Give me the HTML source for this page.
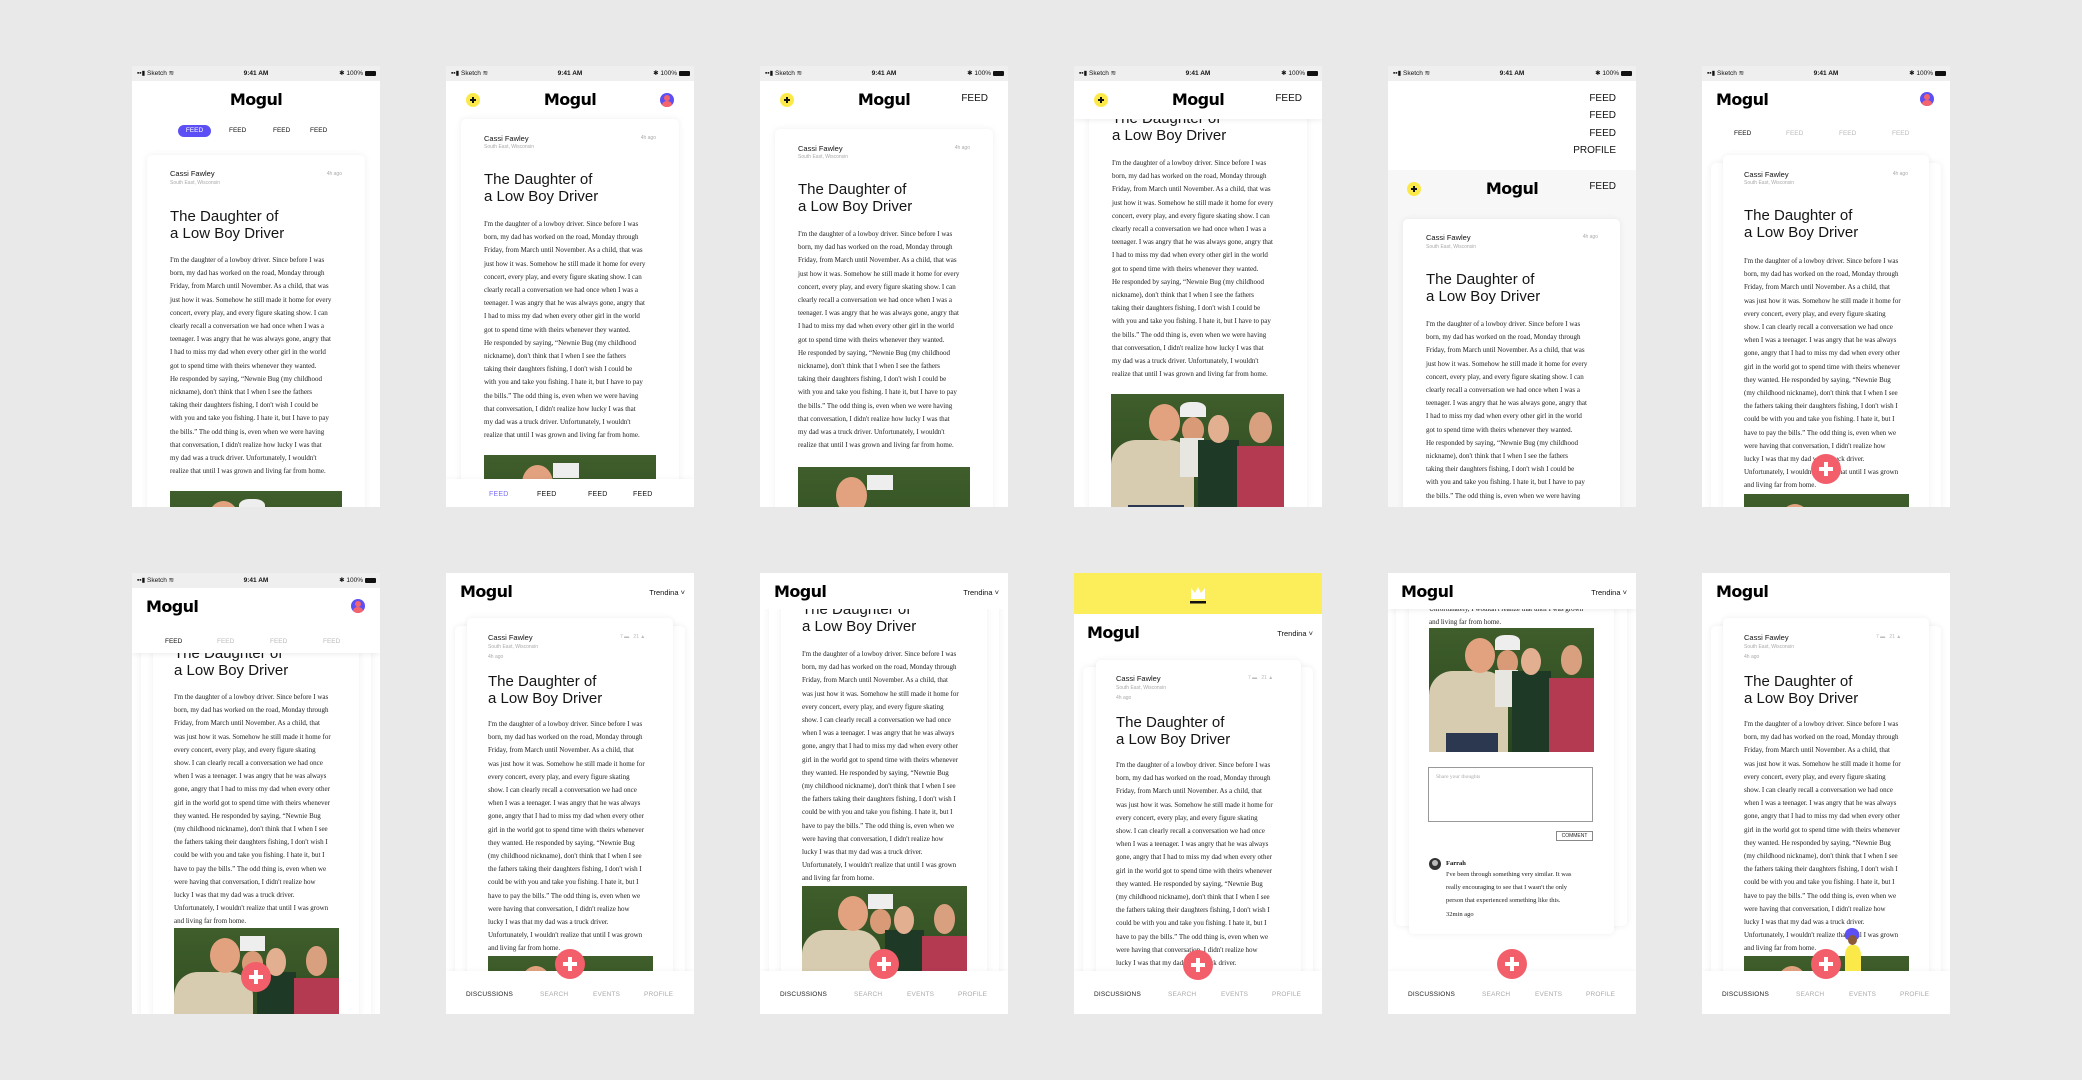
<!DOCTYPE html>
<html><head><meta charset="utf-8"><style>
*{margin:0;padding:0;box-sizing:border-box}
body{width:2082px;height:1080px;background:#e9e9e9;position:relative;overflow:hidden;font-family:"Liberation Sans",sans-serif}
.ph{position:absolute;width:248px;height:441px;background:#fff;overflow:hidden}
.a{position:absolute}
.sb{position:absolute;left:0;top:0;width:248px;height:15px;background:#efefef;font:bold 6.5px/15px "Liberation Sans",sans-serif;color:#111}
.sb .l{position:absolute;left:5px;font-weight:normal}
.sb .c{position:absolute;left:0;width:248px;text-align:center}
.sb .r{position:absolute;right:4px;font-weight:normal}
.bat{display:inline-block;width:11px;height:5px;background:#111;border-radius:1px;vertical-align:-0.5px;margin-left:2px}
.logo{position:absolute;font:bold 16px/20px "DejaVu Sans",sans-serif;letter-spacing:-0.6px;color:#000}
.card{position:absolute;background:#fff;border-radius:5px;box-shadow:0 0 7px rgba(0,0,0,.07)}
.name{position:absolute;font:7.5px/10px "Liberation Sans",sans-serif;color:#111}
.loc{position:absolute;font:5px/7px "Liberation Sans",sans-serif;color:#aaa}
.ago{position:absolute;font:5px/7px "Liberation Sans",sans-serif;color:#aaa}
.title{position:absolute;font:15px/17.4px "Liberation Sans",sans-serif;color:#151515;white-space:nowrap}
.body{position:absolute;font:7px/13.2px "Liberation Serif",serif;color:#222;white-space:nowrap}
.fab{position:absolute;width:30px;height:30px;margin:-15px 0 0 -15px;border-radius:50%;background:#f25f6a;z-index:5}
.fab:before{content:"";position:absolute;left:8px;top:13px;width:14px;height:4px;background:#fff}
.fab:after{content:"";position:absolute;left:13px;top:8px;width:4px;height:14px;background:#fff}
.nav{position:absolute;left:0;top:398px;width:248px;height:44px;background:#fff;z-index:4;box-shadow:0 -1px 4px rgba(0,0,0,.04);font:6.5px/8px "Liberation Sans",sans-serif;color:#aaa;letter-spacing:.2px}
.nav span{position:absolute;top:20px}
.plus{position:absolute;width:14px;height:14px;margin:-7px 0 0 -7px;border-radius:50%;background:#fbe94a}
.plus:before{content:"";position:absolute;left:4px;top:6px;width:6px;height:2px;background:#111}
.plus:after{content:"";position:absolute;left:6px;top:4px;width:2px;height:6px;background:#111}
.av{position:absolute;width:14px;height:14px;margin:-7px 0 0 -7px;border-radius:50%;background:#5b4ff5;overflow:hidden}
.av:before{content:"";position:absolute;left:4px;top:2px;width:6px;height:6px;border-radius:50%;background:#f4646c}
.av:after{content:"";position:absolute;left:2px;top:8px;width:10px;height:8px;border-radius:50%;background:#f4646c}
.hdr{position:absolute;left:0;top:0;width:248px;background:#fff;z-index:3;box-shadow:0 2px 5px rgba(0,0,0,.06)}
.tab{position:absolute;font:6.5px/10px "Liberation Sans",sans-serif;color:#111}
.trend{position:absolute;font:7.5px/10px "Liberation Sans",sans-serif;color:#111}
.cnt{position:absolute;font:5px/7px "Liberation Sans",sans-serif;color:#bbb}
.feedr{position:absolute;font:10px/12px "Liberation Sans",sans-serif;color:#111}
.photo{position:absolute;overflow:hidden;background:linear-gradient(#3f5e2b,#29451d)}
.photo i{position:absolute;display:block}
</style></head><body>

<!-- ROW 1 -->
<!-- P1 -->
<div class="ph" style="left:132px;top:66px">
 <div class="sb"><span class="l">▪▪▮ Sketch ≋</span><span class="c">9:41 AM</span><span class="r">✱ 100%<span class="bat"></span></span></div>
 <div class="logo" style="left:0;width:248px;text-align:center;top:24px">Mogul</div>
 <div class="a" style="left:46px;top:59px;width:33px;height:12px;border-radius:6px;background:#5b4ff5"></div>
 <div class="tab" style="left:46px;width:33px;text-align:center;top:60px;color:#fff">FEED</div>
 <div class="tab" style="left:97px;top:60px">FEED</div>
 <div class="tab" style="left:141px;top:60px">FEED</div>
 <div class="tab" style="left:178px;top:60px">FEED</div>
 <div class="card" style="left:15px;top:89px;width:218px;height:400px"></div>
 <div class="name" style="left:38px;top:103px">Cassi Fawley</div>
 <div class="loc" style="left:38px;top:114px">South East, Wisconsin</div>
 <div class="ago" style="left:190px;width:20px;text-align:right;top:105px">4h ago</div>
 <div class="title" style="left:38px;top:142px">The Daughter of<br>a Low Boy Driver</div>
 <div class="body" style="left:38px;top:188px">I'm the daughter of a lowboy driver. Since before I was<br>born, my dad has worked on the road, Monday through<br>Friday, from March until November. As a child, that was<br>just how it was. Somehow he still made it home for every<br>concert, every play, and every figure skating show. I can<br>clearly recall a conversation we had once when I was a<br>teenager. I was angry that he was always gone, angry that<br>I had to miss my dad when every other girl in the world<br>got to spend time with theirs whenever they wanted.<br>He responded by saying, “Newnie Bug (my childhood<br>nickname), don't think that I when I see the fathers<br>taking their daughters fishing, I don't wish I could be<br>with you and take you fishing. I hate it, but I have to pay<br>the bills.” The odd thing is, even when we were having<br>that conversation, I didn't realize how lucky I was that<br>my dad was a truck driver. Unfortunately, I wouldn't<br>realize that until I was grown and living far from home.</div>
 <div class="photo" style="left:38px;top:425px;width:172px;height:130px"><i style="left:0;top:35%;width:48%;height:65%;background:#d8ccb0;border-radius:30% 30% 0 0"></i><i style="left:22%;top:8%;width:18%;height:28%;background:#e2a27f;border-radius:50%"></i><i style="left:40%;top:6%;width:15%;height:12%;background:#eee;border-radius:40% 40% 0 0"></i><i style="left:41%;top:18%;width:13%;height:20%;background:#d99a78;border-radius:50%"></i><i style="left:50%;top:35%;width:24%;height:65%;background:#1e3a26"></i><i style="left:56%;top:16%;width:12%;height:22%;background:#e2b090;border-radius:50%"></i><i style="left:73%;top:40%;width:27%;height:60%;background:#b43a52"></i><i style="left:80%;top:14%;width:13%;height:24%;background:#d9a080;border-radius:50%"></i></div>
</div>

<!-- P2 -->
<div class="ph" style="left:446px;top:66px">
 <div class="sb"><span class="l">▪▪▮ Sketch ≋</span><span class="c">9:41 AM</span><span class="r">✱ 100%<span class="bat"></span></span></div>
 <div class="plus" style="left:27px;top:34px"></div>
 <div class="logo" style="left:0;width:248px;text-align:center;top:24px">Mogul</div>
 <div class="av" style="left:221px;top:34px"></div>
 <div class="card" style="left:15px;top:53px;width:218px;height:400px"></div>
 <div class="name" style="left:38px;top:68px">Cassi Fawley</div>
 <div class="loc" style="left:38px;top:78px">South East, Wisconsin</div>
 <div class="ago" style="left:190px;width:20px;text-align:right;top:69px">4h ago</div>
 <div class="title" style="left:38px;top:105px">The Daughter of<br>a Low Boy Driver</div>
 <div class="body" style="left:38px;top:152px">I'm the daughter of a lowboy driver. Since before I was<br>born, my dad has worked on the road, Monday through<br>Friday, from March until November. As a child, that was<br>just how it was. Somehow he still made it home for every<br>concert, every play, and every figure skating show. I can<br>clearly recall a conversation we had once when I was a<br>teenager. I was angry that he was always gone, angry that<br>I had to miss my dad when every other girl in the world<br>got to spend time with theirs whenever they wanted.<br>He responded by saying, “Newnie Bug (my childhood<br>nickname), don't think that I when I see the fathers<br>taking their daughters fishing, I don't wish I could be<br>with you and take you fishing. I hate it, but I have to pay<br>the bills.” The odd thing is, even when we were having<br>that conversation, I didn't realize how lucky I was that<br>my dad was a truck driver. Unfortunately, I wouldn't<br>realize that until I was grown and living far from home.</div>
 <div class="photo" style="left:38px;top:389px;width:172px;height:130px"><i style="left:0;top:35%;width:48%;height:65%;background:#d8ccb0"></i><i style="left:22%;top:8%;width:18%;height:28%;background:#e2a27f;border-radius:50%"></i><i style="left:40%;top:6%;width:15%;height:12%;background:#eee"></i><i style="left:50%;top:35%;width:24%;height:65%;background:#1e3a26"></i><i style="left:73%;top:40%;width:27%;height:60%;background:#b43a52"></i></div>
 <div class="nav" style="top:413px;height:30px;font-size:7px;color:#111"><span style="left:43px;top:12px;color:#7b6ff5">FEED</span><span style="left:91px;top:12px">FEED</span><span style="left:142px;top:12px">FEED</span><span style="left:187px;top:12px">FEED</span></div>
</div>

<!-- P3 -->
<div class="ph" style="left:760px;top:66px">
 <div class="sb"><span class="l">▪▪▮ Sketch ≋</span><span class="c">9:41 AM</span><span class="r">✱ 100%<span class="bat"></span></span></div>
 <div class="plus" style="left:27px;top:34px"></div>
 <div class="logo" style="left:0;width:248px;text-align:center;top:24px">Mogul</div>
 <div class="feedr" style="right:20px;top:27px">FEED</div>
 <div class="card" style="left:15px;top:63px;width:218px;height:400px"></div>
 <div class="name" style="left:38px;top:78px">Cassi Fawley</div>
 <div class="loc" style="left:38px;top:88px">South East, Wisconsin</div>
 <div class="ago" style="left:190px;width:20px;text-align:right;top:79px">4h ago</div>
 <div class="title" style="left:38px;top:115px">The Daughter of<br>a Low Boy Driver</div>
 <div class="body" style="left:38px;top:162px">I'm the daughter of a lowboy driver. Since before I was<br>born, my dad has worked on the road, Monday through<br>Friday, from March until November. As a child, that was<br>just how it was. Somehow he still made it home for every<br>concert, every play, and every figure skating show. I can<br>clearly recall a conversation we had once when I was a<br>teenager. I was angry that he was always gone, angry that<br>I had to miss my dad when every other girl in the world<br>got to spend time with theirs whenever they wanted.<br>He responded by saying, “Newnie Bug (my childhood<br>nickname), don't think that I when I see the fathers<br>taking their daughters fishing, I don't wish I could be<br>with you and take you fishing. I hate it, but I have to pay<br>the bills.” The odd thing is, even when we were having<br>that conversation, I didn't realize how lucky I was that<br>my dad was a truck driver. Unfortunately, I wouldn't<br>realize that until I was grown and living far from home.</div>
 <div class="photo" style="left:38px;top:401px;width:172px;height:130px"><i style="left:0;top:35%;width:48%;height:65%;background:#d8ccb0"></i><i style="left:22%;top:8%;width:18%;height:28%;background:#e2a27f;border-radius:50%"></i><i style="left:40%;top:6%;width:15%;height:12%;background:#eee"></i><i style="left:50%;top:35%;width:24%;height:65%;background:#1e3a26"></i><i style="left:73%;top:40%;width:27%;height:60%;background:#b43a52"></i></div>
</div>

<!-- P4 -->
<div class="ph" style="left:1074px;top:66px">
 <div class="hdr" style="height:53px">
  <div class="sb"><span class="l">▪▪▮ Sketch ≋</span><span class="c">9:41 AM</span><span class="r">✱ 100%<span class="bat"></span></span></div>
  <div class="plus" style="left:27px;top:34px"></div>
  <div class="logo" style="left:0;width:248px;text-align:center;top:24px">Mogul</div>
  <div class="feedr" style="right:20px;top:27px">FEED</div>
 </div>
 <div class="card" style="left:15px;top:20px;width:218px;height:440px"></div>
 <div class="title" style="left:38px;top:44px">The Daughter of<br>a Low Boy Driver</div>
 <div class="body" style="left:38px;top:91px">I'm the daughter of a lowboy driver. Since before I was<br>born, my dad has worked on the road, Monday through<br>Friday, from March until November. As a child, that was<br>just how it was. Somehow he still made it home for every<br>concert, every play, and every figure skating show. I can<br>clearly recall a conversation we had once when I was a<br>teenager. I was angry that he was always gone, angry that<br>I had to miss my dad when every other girl in the world<br>got to spend time with theirs whenever they wanted.<br>He responded by saying, “Newnie Bug (my childhood<br>nickname), don't think that I when I see the fathers<br>taking their daughters fishing, I don't wish I could be<br>with you and take you fishing. I hate it, but I have to pay<br>the bills.” The odd thing is, even when we were having<br>that conversation, I didn't realize how lucky I was that<br>my dad was a truck driver. Unfortunately, I wouldn't<br>realize that until I was grown and living far from home.</div>
 <div class="photo" style="left:37px;top:328px;width:173px;height:130px"><i style="left:0;top:35%;width:48%;height:65%;background:#d8ccb0;border-radius:30% 30% 0 0"></i><i style="left:22%;top:8%;width:18%;height:28%;background:#e2a27f;border-radius:50%"></i><i style="left:40%;top:6%;width:15%;height:12%;background:#eee;border-radius:40% 40% 0 0"></i><i style="left:41%;top:18%;width:13%;height:20%;background:#d99a78;border-radius:50%"></i><i style="left:40%;top:34%;width:14%;height:30%;background:#e8e6e0"></i><i style="left:50%;top:35%;width:24%;height:65%;background:#1e3a26"></i><i style="left:56%;top:16%;width:12%;height:22%;background:#e2b090;border-radius:50%"></i><i style="left:73%;top:40%;width:27%;height:60%;background:#b43a52"></i><i style="left:80%;top:14%;width:13%;height:24%;background:#d9a080;border-radius:50%"></i><i style="left:10%;top:85%;width:32%;height:15%;background:#2b3850"></i></div>
</div>

<!-- P5 -->
<div class="ph" style="left:1388px;top:66px;background:#f7f7f7">
 <div class="a" style="left:0;top:0;width:248px;height:104px;background:#fff"></div>
 <div class="sb"><span class="l">▪▪▮ Sketch ≋</span><span class="c">9:41 AM</span><span class="r">✱ 100%<span class="bat"></span></span></div>
 <div class="feedr" style="right:20px;top:27px">FEED</div>
 <div class="feedr" style="right:20px;top:44px">FEED</div>
 <div class="feedr" style="right:20px;top:62px">FEED</div>
 <div class="feedr" style="right:20px;top:79px">PROFILE</div>
 <div class="plus" style="left:26px;top:123px"></div>
 <div class="logo" style="left:0;width:248px;text-align:center;top:113px">Mogul</div>
 <div class="feedr" style="right:20px;top:115px">FEED</div>
 <div class="card" style="left:15px;top:153px;width:217px;height:400px"></div>
 <div class="name" style="left:38px;top:167px">Cassi Fawley</div>
 <div class="loc" style="left:38px;top:178px">South East, Wisconsin</div>
 <div class="ago" style="left:190px;width:20px;text-align:right;top:168px">4h ago</div>
 <div class="title" style="left:38px;top:205px">The Daughter of<br>a Low Boy Driver</div>
 <div class="body" style="left:38px;top:252px">I'm the daughter of a lowboy driver. Since before I was<br>born, my dad has worked on the road, Monday through<br>Friday, from March until November. As a child, that was<br>just how it was. Somehow he still made it home for every<br>concert, every play, and every figure skating show. I can<br>clearly recall a conversation we had once when I was a<br>teenager. I was angry that he was always gone, angry that<br>I had to miss my dad when every other girl in the world<br>got to spend time with theirs whenever they wanted.<br>He responded by saying, “Newnie Bug (my childhood<br>nickname), don't think that I when I see the fathers<br>taking their daughters fishing, I don't wish I could be<br>with you and take you fishing. I hate it, but I have to pay<br>the bills.” The odd thing is, even when we were having</div>
</div>

<!-- P6 -->
<div class="ph" style="left:1702px;top:66px">
 <div class="sb"><span class="l">▪▪▮ Sketch ≋</span><span class="c">9:41 AM</span><span class="r">✱ 100%<span class="bat"></span></span></div>
 <div class="logo" style="left:14px;top:24px">Mogul</div>
 <div class="av" style="left:225px;top:33px"></div>
 <div class="tab" style="left:32px;top:63px">FEED</div>
 <div class="tab" style="left:84px;top:63px;color:#bbb">FEED</div>
 <div class="tab" style="left:137px;top:63px;color:#bbb">FEED</div>
 <div class="tab" style="left:190px;top:63px;color:#bbb">FEED</div>
 <div class="card" style="left:9px;top:97px;width:230px;height:400px"></div>
 <div class="card" style="left:21px;top:89px;width:206px;height:400px"></div>
 <div class="name" style="left:42px;top:104px">Cassi Fawley</div>
 <div class="loc" style="left:42px;top:114px">South East, Wisconsin</div>
 <div class="ago" style="left:186px;width:20px;text-align:right;top:105px">4h ago</div>
 <div class="title" style="left:42px;top:141px">The Daughter of<br>a Low Boy Driver</div>
 <div class="body" style="left:42px;top:189px">I'm the daughter of a lowboy driver. Since before I was<br>born, my dad has worked on the road, Monday through<br>Friday, from March until November. As a child, that<br>was just how it was. Somehow he still made it home for<br>every concert, every play, and every figure skating<br>show. I can clearly recall a conversation we had once<br>when I was a teenager. I was angry that he was always<br>gone, angry that I had to miss my dad when every other<br>girl in the world got to spend time with theirs whenever<br>they wanted. He responded by saying, “Newnie Bug<br>(my childhood nickname), don't think that I when I see<br>the fathers taking their daughters fishing, I don't wish I<br>could be with you and take you fishing. I hate it, but I<br>have to pay the bills.” The odd thing is, even when we<br>were having that conversation, I didn't realize how<br>lucky I was that my dad was a truck driver.<br>Unfortunately, I wouldn't realize that until I was grown<br>and living far from home.</div>
 <div class="photo" style="left:42px;top:428px;width:165px;height:125px"><i style="left:0;top:35%;width:48%;height:65%;background:#d8ccb0"></i><i style="left:22%;top:8%;width:18%;height:28%;background:#e2a27f;border-radius:50%"></i></div>
 <div class="fab" style="left:124px;top:403px"></div>
</div>

<!-- ROW 2 -->
<!-- P7 -->
<div class="ph" style="left:132px;top:573px">
 <div class="card" style="left:9px;top:60px;width:230px;height:420px"></div>
 <div class="card" style="left:21px;top:55px;width:206px;height:420px"></div>
 <div class="title" style="left:42px;top:72px">The Daughter of<br>a Low Boy Driver</div>
 <div class="body" style="left:42px;top:118px">I'm the daughter of a lowboy driver. Since before I was<br>born, my dad has worked on the road, Monday through<br>Friday, from March until November. As a child, that<br>was just how it was. Somehow he still made it home for<br>every concert, every play, and every figure skating<br>show. I can clearly recall a conversation we had once<br>when I was a teenager. I was angry that he was always<br>gone, angry that I had to miss my dad when every other<br>girl in the world got to spend time with theirs whenever<br>they wanted. He responded by saying, “Newnie Bug<br>(my childhood nickname), don't think that I when I see<br>the fathers taking their daughters fishing, I don't wish I<br>could be with you and take you fishing. I hate it, but I<br>have to pay the bills.” The odd thing is, even when we<br>were having that conversation, I didn't realize how<br>lucky I was that my dad was a truck driver.<br>Unfortunately, I wouldn't realize that until I was grown<br>and living far from home.</div>
 <div class="photo" style="left:42px;top:355px;width:165px;height:125px"><i style="left:0;top:35%;width:48%;height:65%;background:#d8ccb0;border-radius:30% 30% 0 0"></i><i style="left:22%;top:8%;width:18%;height:28%;background:#e2a27f;border-radius:50%"></i><i style="left:40%;top:6%;width:15%;height:12%;background:#eee"></i><i style="left:41%;top:18%;width:13%;height:20%;background:#d99a78;border-radius:50%"></i><i style="left:50%;top:35%;width:24%;height:65%;background:#1e3a26"></i><i style="left:56%;top:16%;width:12%;height:22%;background:#e2b090;border-radius:50%"></i><i style="left:73%;top:40%;width:27%;height:60%;background:#b43a52"></i><i style="left:80%;top:14%;width:13%;height:24%;background:#d9a080;border-radius:50%"></i></div>
 <div class="hdr" style="height:80px">
  <div class="sb"><span class="l">▪▪▮ Sketch ≋</span><span class="c">9:41 AM</span><span class="r">✱ 100%<span class="bat"></span></span></div>
  <div class="logo" style="left:14px;top:24px">Mogul</div>
  <div class="av" style="left:226px;top:33px"></div>
  <div class="tab" style="left:33px;top:64px">FEED</div>
  <div class="tab" style="left:85px;top:64px;color:#bbb">FEED</div>
  <div class="tab" style="left:138px;top:64px;color:#bbb">FEED</div>
  <div class="tab" style="left:191px;top:64px;color:#bbb">FEED</div>
 </div>
 <div class="fab" style="left:124px;top:404px"></div>
</div>

<!-- P8 -->
<div class="ph" style="left:446px;top:573px">
 <div class="logo" style="left:14px;top:9px">Mogul</div>
 <div class="trend" style="right:9px;top:15px">Trendina ˅</div>
 <div class="card" style="left:9px;top:53px;width:230px;height:400px"></div>
 <div class="card" style="left:21px;top:45px;width:206px;height:400px"></div>
 <div class="name" style="left:42px;top:60px">Cassi Fawley</div>
 <div class="loc" style="left:42px;top:71px">South East, Wisconsin</div>
 <div class="loc" style="left:42px;top:81px">4h ago</div>
 <div class="cnt" style="left:174px;top:61px">7 ▬&nbsp;&nbsp; 21 ▲</div>
 <div class="title" style="left:42px;top:100px">The Daughter of<br>a Low Boy Driver</div>
 <div class="body" style="left:42px;top:145px">I'm the daughter of a lowboy driver. Since before I was<br>born, my dad has worked on the road, Monday through<br>Friday, from March until November. As a child, that<br>was just how it was. Somehow he still made it home for<br>every concert, every play, and every figure skating<br>show. I can clearly recall a conversation we had once<br>when I was a teenager. I was angry that he was always<br>gone, angry that I had to miss my dad when every other<br>girl in the world got to spend time with theirs whenever<br>they wanted. He responded by saying, “Newnie Bug<br>(my childhood nickname), don't think that I when I see<br>the fathers taking their daughters fishing, I don't wish I<br>could be with you and take you fishing. I hate it, but I<br>have to pay the bills.” The odd thing is, even when we<br>were having that conversation, I didn't realize how<br>lucky I was that my dad was a truck driver.<br>Unfortunately, I wouldn't realize that until I was grown<br>and living far from home.</div>
 <div class="photo" style="left:42px;top:383px;width:165px;height:125px"><i style="left:20%;top:8%;width:18%;height:28%;background:#e2a27f;border-radius:50%"></i></div>
 <div class="fab" style="left:124px;top:391px"></div>
 <div class="nav"><span style="left:20px;color:#222">DISCUSSIONS</span><span style="left:94px">SEARCH</span><span style="left:147px">EVENTS</span><span style="left:198px">PROFILE</span></div>
</div>

<!-- P9 -->
<div class="ph" style="left:760px;top:573px">
 <div class="card" style="left:9px;top:0;width:230px;height:420px"></div>
 <div class="card" style="left:21px;top:0;width:206px;height:420px"></div>
 <div class="title" style="left:42px;top:28px">The Daughter of<br>a Low Boy Driver</div>
 <div class="body" style="left:42px;top:75px">I'm the daughter of a lowboy driver. Since before I was<br>born, my dad has worked on the road, Monday through<br>Friday, from March until November. As a child, that<br>was just how it was. Somehow he still made it home for<br>every concert, every play, and every figure skating<br>show. I can clearly recall a conversation we had once<br>when I was a teenager. I was angry that he was always<br>gone, angry that I had to miss my dad when every other<br>girl in the world got to spend time with theirs whenever<br>they wanted. He responded by saying, “Newnie Bug<br>(my childhood nickname), don't think that I when I see<br>the fathers taking their daughters fishing, I don't wish I<br>could be with you and take you fishing. I hate it, but I<br>have to pay the bills.” The odd thing is, even when we<br>were having that conversation, I didn't realize how<br>lucky I was that my dad was a truck driver.<br>Unfortunately, I wouldn't realize that until I was grown<br>and living far from home.</div>
 <div class="photo" style="left:42px;top:313px;width:165px;height:125px"><i style="left:0;top:35%;width:48%;height:65%;background:#d8ccb0;border-radius:30% 30% 0 0"></i><i style="left:22%;top:8%;width:18%;height:28%;background:#e2a27f;border-radius:50%"></i><i style="left:40%;top:6%;width:15%;height:12%;background:#eee"></i><i style="left:41%;top:18%;width:13%;height:20%;background:#d99a78;border-radius:50%"></i><i style="left:50%;top:35%;width:24%;height:65%;background:#1e3a26"></i><i style="left:56%;top:16%;width:12%;height:22%;background:#e2b090;border-radius:50%"></i><i style="left:73%;top:40%;width:27%;height:60%;background:#b43a52"></i><i style="left:80%;top:14%;width:13%;height:24%;background:#d9a080;border-radius:50%"></i></div>
 <div class="hdr" style="height:36px;box-shadow:none">
  <div class="logo" style="left:14px;top:9px">Mogul</div>
  <div class="trend" style="right:9px;top:15px">Trendina ˅</div>
 </div>
 <div class="fab" style="left:124px;top:391px"></div>
 <div class="nav"><span style="left:20px;color:#222">DISCUSSIONS</span><span style="left:94px">SEARCH</span><span style="left:147px">EVENTS</span><span style="left:198px">PROFILE</span></div>
</div>

<!-- P10 -->
<div class="ph" style="left:1074px;top:573px">
 <div class="a" style="left:0;top:0;width:248px;height:41px;background:#fcee5a"></div>
 <svg class="a" style="left:116px;top:12px" width="16" height="20" viewBox="0 0 16 20"><path d="M1 3 L5 8 L8 2 L11 8 L15 3 L15 14 L1 14 Z" fill="#fff"/><rect x="0" y="16" width="16" height="2.5" fill="#111"/></svg>
 <div class="logo" style="left:13px;top:50px">Mogul</div>
 <div class="trend" style="right:9px;top:56px">Trendina ˅</div>
 <div class="card" style="left:9px;top:94px;width:230px;height:400px"></div>
 <div class="card" style="left:22px;top:87px;width:205px;height:400px"></div>
 <div class="name" style="left:42px;top:101px">Cassi Fawley</div>
 <div class="loc" style="left:42px;top:112px">South East, Wisconsin</div>
 <div class="loc" style="left:42px;top:122px">4h ago</div>
 <div class="cnt" style="left:174px;top:102px">7 ▬&nbsp;&nbsp; 21 ▲</div>
 <div class="title" style="left:42px;top:141px">The Daughter of<br>a Low Boy Driver</div>
 <div class="body" style="left:42px;top:186px">I'm the daughter of a lowboy driver. Since before I was<br>born, my dad has worked on the road, Monday through<br>Friday, from March until November. As a child, that<br>was just how it was. Somehow he still made it home for<br>every concert, every play, and every figure skating<br>show. I can clearly recall a conversation we had once<br>when I was a teenager. I was angry that he was always<br>gone, angry that I had to miss my dad when every other<br>girl in the world got to spend time with theirs whenever<br>they wanted. He responded by saying, “Newnie Bug<br>(my childhood nickname), don't think that I when I see<br>the fathers taking their daughters fishing, I don't wish I<br>could be with you and take you fishing. I hate it, but I<br>have to pay the bills.” The odd thing is, even when we<br>were having that conversation, I didn't realize how<br>lucky I was that my dad was a truck driver.</div>
 <div class="fab" style="left:124px;top:392px"></div>
 <div class="nav"><span style="left:20px;color:#222">DISCUSSIONS</span><span style="left:94px">SEARCH</span><span style="left:147px">EVENTS</span><span style="left:198px">PROFILE</span></div>
</div>

<!-- P11 -->
<div class="ph" style="left:1388px;top:573px">
 <div class="card" style="left:8px;top:0;width:231px;height:353px"></div>
 <div class="card" style="left:21px;top:0;width:205px;height:361px"></div>
 <div class="body" style="left:41px;top:30px">Unfortunately, I wouldn't realize that until I was grown<br>and living far from home.</div>
 <div class="photo" style="left:41px;top:55px;width:165px;height:124px"><i style="left:0;top:35%;width:48%;height:65%;background:#d8ccb0;border-radius:30% 30% 0 0"></i><i style="left:22%;top:8%;width:18%;height:28%;background:#e2a27f;border-radius:50%"></i><i style="left:40%;top:6%;width:15%;height:12%;background:#eee;border-radius:40% 40% 0 0"></i><i style="left:41%;top:18%;width:13%;height:20%;background:#d99a78;border-radius:50%"></i><i style="left:40%;top:34%;width:14%;height:30%;background:#e8e6e0"></i><i style="left:50%;top:35%;width:24%;height:65%;background:#1e3a26"></i><i style="left:56%;top:16%;width:12%;height:22%;background:#e2b090;border-radius:50%"></i><i style="left:73%;top:40%;width:27%;height:60%;background:#b43a52"></i><i style="left:80%;top:14%;width:13%;height:24%;background:#d9a080;border-radius:50%"></i><i style="left:10%;top:85%;width:32%;height:15%;background:#2b3850"></i></div>
 <div class="a" style="left:40px;top:194px;width:165px;height:55px;border:1px solid #999"></div>
 <div class="a" style="left:48px;top:200px;font:5.5px/8px 'Liberation Serif',serif;color:#aaa">Share your thoughts</div>
 <div class="a" style="left:168px;top:258px;width:37px;height:10px;border:1px solid #888;font:5px/8px 'Liberation Sans',sans-serif;text-align:center;color:#222">COMMENT</div>
 <div class="a" style="left:41px;top:285px;width:12px;height:12px;border-radius:50%;background:#333"></div>
 <div class="a" style="left:44px;top:287px;width:6px;height:6px;border-radius:50%;background:#bbb"></div>
 <div class="a" style="left:58px;top:286px;font:bold 6.5px/10px 'Liberation Serif',serif;color:#111">Farrah</div>
 <div class="body" style="left:58px;top:295px;font-size:6.5px">I've been through something very similar. It was<br>really encouraging to see that I wasn't the only<br>person that experienced something like this.<br>32min ago</div>
 <div class="hdr" style="height:36px">
  <div class="logo" style="left:13px;top:9px">Mogul</div>
  <div class="trend" style="right:9px;top:15px">Trendina ˅</div>
 </div>
 <div class="fab" style="left:124px;top:391px"></div>
 <div class="nav"><span style="left:20px;color:#222">DISCUSSIONS</span><span style="left:94px">SEARCH</span><span style="left:147px">EVENTS</span><span style="left:198px">PROFILE</span></div>
</div>

<!-- P12 -->
<div class="ph" style="left:1702px;top:573px">
 <div class="logo" style="left:14px;top:9px">Mogul</div>
 <div class="card" style="left:9px;top:53px;width:230px;height:400px"></div>
 <div class="card" style="left:21px;top:45px;width:206px;height:400px"></div>
 <div class="name" style="left:42px;top:60px">Cassi Fawley</div>
 <div class="loc" style="left:42px;top:71px">South East, Wisconsin</div>
 <div class="loc" style="left:42px;top:81px">4h ago</div>
 <div class="cnt" style="left:174px;top:61px">7 ▬&nbsp;&nbsp; 21 ▲</div>
 <div class="title" style="left:42px;top:100px">The Daughter of<br>a Low Boy Driver</div>
 <div class="body" style="left:42px;top:145px">I'm the daughter of a lowboy driver. Since before I was<br>born, my dad has worked on the road, Monday through<br>Friday, from March until November. As a child, that<br>was just how it was. Somehow he still made it home for<br>every concert, every play, and every figure skating<br>show. I can clearly recall a conversation we had once<br>when I was a teenager. I was angry that he was always<br>gone, angry that I had to miss my dad when every other<br>girl in the world got to spend time with theirs whenever<br>they wanted. He responded by saying, “Newnie Bug<br>(my childhood nickname), don't think that I when I see<br>the fathers taking their daughters fishing, I don't wish I<br>could be with you and take you fishing. I hate it, but I<br>have to pay the bills.” The odd thing is, even when we<br>were having that conversation, I didn't realize how<br>lucky I was that my dad was a truck driver.<br>Unfortunately, I wouldn't realize that until I was grown<br>and living far from home.</div>
 <div class="photo" style="left:42px;top:383px;width:165px;height:125px"><i style="left:20%;top:8%;width:18%;height:28%;background:#e2a27f;border-radius:50%"></i></div>
 <div class="fab" style="left:124px;top:391px"></div>
 <div class="a" style="left:143px;top:355px;width:14px;height:12px;border-radius:50% 50% 30% 30%;background:#5b4ff5;z-index:6"></div>
 <div class="a" style="left:146px;top:362px;width:9px;height:10px;border-radius:50%;background:#8a5a3a;z-index:6"></div>
 <div class="a" style="left:143px;top:372px;width:16px;height:26px;border-radius:40% 40% 0 0;background:#fbe94a;z-index:6"></div>
 <div class="nav"><span style="left:20px;color:#222">DISCUSSIONS</span><span style="left:94px">SEARCH</span><span style="left:147px">EVENTS</span><span style="left:198px">PROFILE</span></div>
</div>

</body></html>
